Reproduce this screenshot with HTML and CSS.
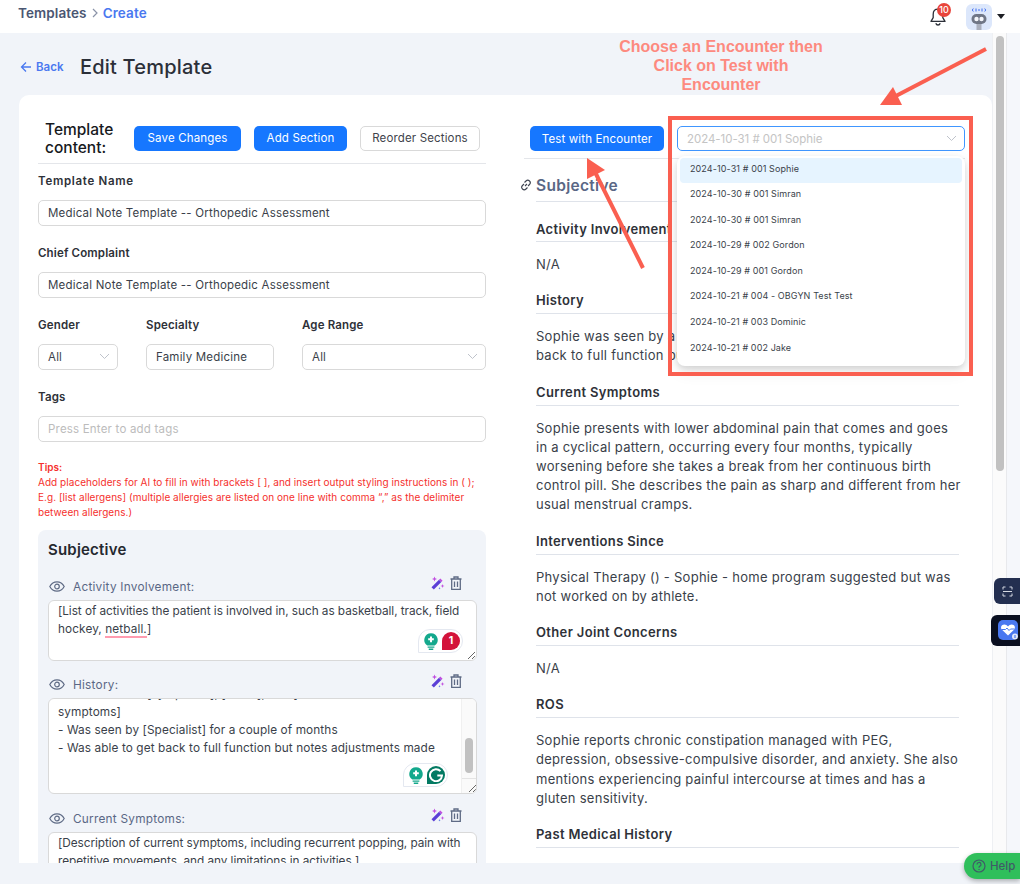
FILE: index.html
```html
<!DOCTYPE html>
<html lang="en">
<head>
<meta charset="utf-8">
<title>Edit Template</title>
<link rel="stylesheet" href="styles.css">
</head>
<body>
<header class="topbar">
  <nav class="crumbs"><span>Templates</span>
    <svg class="crumb-sep" width="8" height="10" viewBox="0 0 8 10"><path d="M2 1l4 4-4 4" fill="none" stroke="#8a93a8" stroke-width="1.2"/></svg>
    <span class="crumb-active">Create</span></nav>
  <div class="top-actions">
    <div class="bell">
      <svg width="18" height="20" viewBox="0 0 18 20"><path d="M9 2.2c-3 0-4.8 2.2-4.8 5v3.4L2 14.4h14l-2.2-3.8V7.200c0-2.800-1.800-5-4.800-5zM6.800 16.200c.4 1.200 1.200 1.800 2.200 1.800s1.800-.6 2.200-1.800" fill="none" stroke="#2b2f38" stroke-width="1.300" stroke-linejoin="round"/></svg>
      <span class="bell-badge">10</span>
    </div>
    <div class="avatar">
      <svg width="26" height="26" viewBox="0 0 26 26">
        <path d="M7.300 4.500l-1 1.500 1 1.500M18.700 4.500l1 1.500-1 1.500M10 4.500v3M16 4.500v3M13 5v2" stroke="#3f6df0" stroke-width="1" fill="none"/>
        <rect x="10.500" y="19" width="5" height="7" fill="#a9afbd"/>
        <rect x="5.500" y="10" width="15" height="10" rx="5" fill="#6f7686"/>
        <circle cx="10.500" cy="15" r="2.200" fill="#f4f6fb"/><circle cx="15.500" cy="15" r="2.200" fill="#f4f6fb"/>
      </svg>
    </div>
    <span class="caret"></span>
  </div>
</header>

<div class="workspace">
  <main class="main">
    <div class="title-row">
      <a class="back">
        <svg width="12" height="12" viewBox="0 0 12 12"><path d="M11 6H1.500M6 1.500L1.500 6 6 10.500" fill="none" stroke="#4a78f0" stroke-width="1.300"/></svg>
        Back</a>
      <h1 class="page-title">Edit Template</h1>
    </div>
    <div class="card">
      <section class="left">
        <div class="head-row">
          <div class="head-title">Template<br>content:</div>
          <button class="btn btn-primary btn-save">Save Changes</button>
          <button class="btn btn-primary btn-add">Add Section</button>
          <button class="btn btn-plain">Reorder Sections</button>
        </div>
        <label class="lbl lbl-first">Template Name</label>
        <div class="field">Medical Note Template -- Orthopedic Assessment</div>
        <label class="lbl">Chief Complaint</label>
        <div class="field">Medical Note Template -- Orthopedic Assessment</div>
        <div class="tri">
          <div class="tri-gender"><label class="lbl">Gender</label>
            <div class="field field-select">All<svg class="chev" width="11" height="7" viewBox="0 0 11 7"><path d="M1 1l4.500 4.500L10 1" fill="none" stroke="#bfc3cb"/></svg></div></div>
          <div class="tri-spec"><label class="lbl">Specialty</label>
            <div class="field">Family Medicine</div></div>
          <div class="tri-age"><label class="lbl">Age Range</label>
            <div class="field field-select">All<svg class="chev" width="11" height="7" viewBox="0 0 11 7"><path d="M1 1l4.500 4.500L10 1" fill="none" stroke="#bfc3cb"/></svg></div></div>
        </div>
        <label class="lbl">Tags</label>
        <div class="field field-ph">Press Enter to add tags</div>
        <div class="tips"><strong>Tips:</strong><br>Add placeholders for AI to fill in with brackets [ ], and insert output styling instructions in ( );<br>E.g. [list allergens] (multiple allergies are listed on one line with comma “,” as the delimiter<br>between allergens.)</div>
        <div class="panel">
          <h2 class="panel-title">Subjective</h2>

          <div class="item-head">
            <svg class="eye" width="16" height="11" viewBox="0 0 16 11"><path d="M.8 5.500C2.500 2.300 5 .8 8 .8s5.500 1.500 7.200 4.700C13.500 8.700 11 10.200 8 10.200S2.500 8.700.8 5.500z" fill="none" stroke="#5f6b85" stroke-width="1.200"/><circle cx="8" cy="5.500" r="2.300" fill="none" stroke="#5f6b85" stroke-width="1.200"/></svg>
            <span class="item-name">Activity Involvement:</span>
            <svg class="wand" width="14" height="14" viewBox="0 0 14 14"><path d="M.5 11.200L8 3.700l2.300 2.300-7.500 7.500z" fill="#5b3fd6"/><path d="M8 3.700l2.300 2.300 1.300-1.300-2.300-2.300z" fill="#c04de0"/><path d="M3.500 .5l.7 1.800 1.800.7-1.800.7-.7 1.800-.7-1.800L1 3l1.800-.7zM11.500 8l.5 1.500 1.500.5-1.500.5-.5 1.500-.5-1.500-1.500-.5 1.500-.5z" fill="#c04de0"/><path d="M8.500 11l.3.9.9.3-.9.3-.3.9-.3-.9-.9-.3.9-.3z" fill="#3f5de0"/></svg>
            <svg class="trash" width="12" height="14" viewBox="0 0 12 14"><path d="M.5 3h11M4 3V1h4v2M1.700 3v10.300h8.600V3M4.500 5.500v5.500M7.500 5.500v5.500" fill="none" stroke="#5f6b85" stroke-width="1.300"/></svg>
          </div>
          <div class="area area-a"><span class="tight">[List of activities the patient is involved in, such as basketball, track, field</span><br>hockey, <span class="misspelt">netball.</span>]
            <div class="gram gram-a">
              <svg width="16" height="18" viewBox="0 0 14 16"><path d="M7 1a6 6 0 0 0-3.300 11h6.600A6 6 0 0 0 7 1z" fill="#13a88c"/><path d="M7 4v5M4.500 6.500h5" stroke="#fff" stroke-width="1.800"/><path d="M4 13.500h6M5 15.300h4" stroke="#13a88c" stroke-width="1.200"/></svg>
              <span class="gram-count">1</span>
            </div>
            <svg class="resize" width="8" height="8" viewBox="0 0 8 8"><path d="M1 8l7-7M5 8l3-3" stroke="#666"/></svg>
          </div>

          <div class="item-head">
            <svg class="eye" width="16" height="11" viewBox="0 0 16 11"><path d="M.8 5.500C2.500 2.300 5 .8 8 .8s5.500 1.500 7.200 4.700C13.500 8.700 11 10.200 8 10.200S2.500 8.700.8 5.500z" fill="none" stroke="#5f6b85" stroke-width="1.200"/><circle cx="8" cy="5.500" r="2.300" fill="none" stroke="#5f6b85" stroke-width="1.200"/></svg>
            <span class="item-name">History:</span>
            <svg class="wand" width="14" height="14" viewBox="0 0 14 14"><path d="M.5 11.200L8 3.700l2.300 2.300-7.500 7.500z" fill="#5b3fd6"/><path d="M8 3.700l2.300 2.300 1.300-1.300-2.300-2.300z" fill="#c04de0"/><path d="M3.500 .5l.7 1.800 1.800.7-1.800.7-.7 1.800-.7-1.800L1 3l1.800-.7zM11.500 8l.5 1.500 1.500.5-1.500.5-.5 1.500-.5-1.500-1.500-.5 1.500-.5z" fill="#c04de0"/><path d="M8.500 11l.3.9.9.3-.9.3-.3.9-.3-.9-.9-.3.9-.3z" fill="#3f5de0"/></svg>
            <svg class="trash" width="12" height="14" viewBox="0 0 12 14"><path d="M.5 3h11M4 3V1h4v2M1.700 3v10.300h8.600V3M4.500 5.500v5.500M7.500 5.500v5.500" fill="none" stroke="#5f6b85" stroke-width="1.300"/></svg>
          </div>
          <div class="area area-b">
            <div class="area-b-text">- Presents with [symptoms], [onset], and [other<br>symptoms]<br>- Was seen by [Specialist] for a couple of months<br>- Was able to get back to full function but notes adjustments made</div>
            <div class="area-scroll"><span class="area-thumb"></span><span class="area-corner"><svg width="8" height="8" viewBox="0 0 8 8"><path d="M1 8l7-7M5 8l3-3" stroke="#666"/></svg></span></div>
            <div class="gram gram-b">
              <svg width="16" height="18" viewBox="0 0 14 16"><path d="M7 1a6 6 0 0 0-3.300 11h6.600A6 6 0 0 0 7 1z" fill="#13a88c"/><path d="M7 4v5M4.500 6.500h5" stroke="#fff" stroke-width="1.800"/><path d="M4 13.500h6M5 15.300h4" stroke="#13a88c" stroke-width="1.200"/></svg>
              <span class="gram-g"><svg width="14" height="14" viewBox="0 0 14 14"><path d="M11.500 3.200A6 6 0 1 0 13 7.500H8.300" fill="none" stroke="#fff" stroke-width="2"/></svg></span>
            </div>
          </div>

          <div class="item-head">
            <svg class="eye" width="16" height="11" viewBox="0 0 16 11"><path d="M.8 5.500C2.500 2.300 5 .8 8 .8s5.500 1.500 7.200 4.700C13.500 8.700 11 10.200 8 10.200S2.500 8.700.8 5.500z" fill="none" stroke="#5f6b85" stroke-width="1.200"/><circle cx="8" cy="5.500" r="2.300" fill="none" stroke="#5f6b85" stroke-width="1.200"/></svg>
            <span class="item-name">Current Symptoms:</span>
            <svg class="wand" width="14" height="14" viewBox="0 0 14 14"><path d="M.5 11.200L8 3.700l2.300 2.300-7.500 7.500z" fill="#5b3fd6"/><path d="M8 3.700l2.300 2.300 1.300-1.300-2.300-2.300z" fill="#c04de0"/><path d="M3.500 .5l.7 1.800 1.800.7-1.800.7-.7 1.800-.7-1.800L1 3l1.800-.7zM11.500 8l.5 1.500 1.500.5-1.500.5-.5 1.500-.5-1.500-1.500-.5 1.500-.5z" fill="#c04de0"/><path d="M8.500 11l.3.9.9.3-.9.3-.3.9-.3-.9-.9-.3.9-.3z" fill="#3f5de0"/></svg>
            <svg class="trash" width="12" height="14" viewBox="0 0 12 14"><path d="M.5 3h11M4 3V1h4v2M1.700 3v10.300h8.600V3M4.500 5.500v5.500M7.500 5.500v5.500" fill="none" stroke="#5f6b85" stroke-width="1.300"/></svg>
          </div>
          <div class="area area-c"><span class="tight">[Description of current symptoms, including recurrent popping, pain with</span><br><span class="tight">repetitive movements, and any limitations in activities.]</span></div>
        </div>
      </section>

      <section class="right">
        <div class="test-row">
          <button class="btn btn-primary btn-test">Test with Encounter</button>
          <div class="enc-select">2024-10-31 # 001 Sophie<svg class="enc-chev" width="11" height="7" viewBox="0 0 11 7"><path d="M1 1l4.500 4.500L10 1" fill="none" stroke="#bfc3cb"/></svg></div>
        </div>
        <article class="note">
          <h2 class="note-title"><svg class="link-ico" width="12" height="12" viewBox="0 0 12 12"><path d="M5 7l2-2M4.500 3.500l1.500-1.500a2.300 2.300 0 0 1 3.500 3.500L8 7M7.500 8.500L6 10a2.300 2.300 0 0 1-3.500-3.500L4 5" fill="none" stroke="#3d4350" stroke-width="1.100"/></svg>Subjective</h2>
          <h3 class="note-h">Activity Involvement</h3>
          <p class="note-p">N/A</p>
          <h3 class="note-h">History</h3>
          <p class="note-p">Sophie was seen by a specialist for a couple of months and<br>back to full function but notes some adjustments.</p>
          <h3 class="note-h">Current Symptoms</h3>
          <p class="note-p">Sophie presents with lower abdominal pain that comes and goes<br>in a cyclical pattern, occurring every four months, typically<br>worsening before she takes a break from her continuous birth<br>control pill. She describes the pain as sharp and different from her<br>usual menstrual cramps.</p>
          <h3 class="note-h">Interventions Since</h3>
          <p class="note-p">Physical Therapy () - Sophie - home program suggested but was<br>not worked on by athlete.</p>
          <h3 class="note-h">Other Joint Concerns</h3>
          <p class="note-p">N/A</p>
          <h3 class="note-h">ROS</h3>
          <p class="note-p">Sophie reports chronic constipation managed with PEG,<br>depression, obsessive-compulsive disorder, and anxiety. She also<br>mentions experiencing painful intercourse at times and has a<br>gluten sensitivity.</p>
          <h3 class="note-h">Past Medical History</h3>
        </article>
      </section>
    </div>
  </main>
  <div class="scrollbar"><span class="scroll-thumb"></span></div>
  <div class="gutter"></div>
</div>
<div class="bottom-strip"></div>

<ul class="enc-menu">
  <li class="enc-item enc-item-on">2024-10-31 # 001 Sophie</li>
  <li class="enc-item">2024-10-30 # 001 Simran</li>
  <li class="enc-item">2024-10-30 # 001 Simran</li>
  <li class="enc-item">2024-10-29 # 002 Gordon</li>
  <li class="enc-item">2024-10-29 # 001 Gordon</li>
  <li class="enc-item">2024-10-21 # 004 - OBGYN Test Test</li>
  <li class="enc-item">2024-10-21 # 003 Dominic</li>
  <li class="enc-item">2024-10-21 # 002 Jake</li>
</ul>

<div class="anno-box"></div>
<div class="anno-text">Choose an Encounter then<br>Click on Test with<br>Encounter</div>
<svg class="anno-arrows" width="1020" height="884" viewBox="0 0 1020 884">
  <path d="M986 49L892 98" stroke="#fa5f50" stroke-width="4" fill="none"/>
  <path d="M880 105L893 87L902 105z" fill="#fa5f50"/>
  <path d="M643 268L595 172" stroke="#fa5f50" stroke-width="4" fill="none"/>
  <path d="M587 158L587 179L605 170z" fill="#fa5f50"/>
</svg>

<div class="float-scan"><svg width="11" height="11" viewBox="0 0 11 11"><path d="M1 3.500V1h2.500M7.500 1H10v2.500M10 7.500V10H7.500M3.500 10H1V7.500M1 5.500h9" fill="none" stroke="#d5d9e2" stroke-width="1"/></svg></div>
<div class="float-heart"><span class="heart-tile"><svg width="20" height="20" viewBox="0 0 20 20"><path d="M10 15.500L4 9.800C2 7.500 3.500 4.500 6.300 4.500c1.500 0 2.800.8 3.700 2 .9-1.200 2.200-2 3.700-2 2.800 0 4.300 3 2.300 5.300z" fill="#fff"/><path d="M3.500 9.500h4l1.500-1.500 2 2.500 1.500-1.500h4" fill="none" stroke="#4a78f0" stroke-width="1"/><circle cx="17" cy="16.500" r="3" fill="#dfe7fb"/><path d="M17 15v3" stroke="#4a78f0" stroke-width="1.200"/></svg></span></div>
<div class="help"><svg width="14" height="14" viewBox="0 0 14 14"><circle cx="7" cy="7" r="6" fill="none" stroke="#3f5b68" stroke-width="1.200"/><path d="M5 5.500A2 2 0 1 1 7.500 7.400C7 7.600 7 8 7 8.700M7 10v1" fill="none" stroke="#3f5b68" stroke-width="1.200"/></svg>Help</div>
</body>
</html>
```

FILE: styles.css
```css
* { box-sizing: border-box; }
html, body { margin: 0; padding: 0; }
body {
  width: 1020px; height: 884px; overflow: hidden; position: relative;
  background: #f1f4f9; color: #3a3f4a;
  font-family: Inter, "Open Sans", sans-serif; font-size: 12px;
}
.topbar { height: 33px; background: #fff; display: flex; align-items: center; justify-content: space-between; padding: 0 15px 7px 18px; }
.crumbs { display: flex; align-items: center; gap: 4px; font-size: 13.500px; font-weight: 600; color: #4a5672; letter-spacing: .1px; }
.crumb-active { color: #4a78f0; }
.top-actions { display: flex; align-items: center; position: relative; margin-top: 7px; }
.bell { position: relative; width: 18px; height: 20px; margin-right: 19px; }
.bell-badge { position: absolute; left: 8px; top: -4px; width: 14px; height: 14px; border-radius: 50%; background: #e8453c; color: #fff; font-size: 9px; font-weight: 500; line-height: 14px; text-align: center; }
.avatar { width: 26px; height: 26px; border-radius: 6px; background: #dce7fb; overflow: hidden; margin-right: 5px; }
.caret { width: 0; height: 0; border-left: 4.500px solid transparent; border-right: 4.500px solid transparent; border-top: 5px solid #1d1f24; }

.workspace { height: 830px; display: flex; }
.main { width: 992px; overflow: hidden; padding-left: 19px; }
.title-row { height: 62px; display: flex; align-items: center; padding-left: 1px; padding-top: 6px; }
.back { display: flex; align-items: center; gap: 4px; color: #4a78f0; font-weight: 600; font-size: 11.500px; width: 60px; }
.page-title { margin: 0; font-size: 20px; font-weight: 500; color: #2b2f38; letter-spacing: .2px; }
.card { width: 973px; background: #fff; border-radius: 10px 10px 0 0; padding: 31px 27px 0 19px; display: flex; height: 768px; }
.left { width: 448px; flex: none; }
.right { flex: 1; margin-left: 44px; min-width: 0; }

.head-row { display: flex; align-items: center; height: 38px; border-bottom: 1px solid #e4e6ea; padding-left: 7px; }
.head-title { width: 89px; font-size: 15.500px; font-weight: 500; line-height: 18px; color: #17191d; margin-top: -11px; }
.btn { height: 25px; border-radius: 5px; border: 1px solid transparent; font: inherit; font-size: 11.500px; padding: 0; cursor: pointer; letter-spacing: .15px; margin-top: -13px; flex: none; }
.btn-primary { background: #1677ff; color: #fff; }
.btn-plain { background: #fff; border-color: #d9d9d9; color: #3f434c; width: 120px; }
.btn-save { width: 107px; margin-right: 13px; }
.btn-add { width: 93px; margin-right: 13px; }
.btn-test { width: 134px; margin: 0; }

.lbl { display: block; font-size: 11.500px; font-weight: 600; color: #2e3138; line-height: 16px; margin: 19px 0 11px; letter-spacing: .15px; }
.lbl-first { margin-top: 9px; letter-spacing: .7px; }
.field { position: relative; height: 26px; border: 1px solid #d9d9d9; border-radius: 5px; background: #fff; padding: 0 9px; line-height: 24px; font-size: 11.500px; color: #3a3f4a; letter-spacing: .2px; white-space: nowrap; }
.field-ph { color: #bcbcbc; }
.chev { position: absolute; right: 7px; top: 8px; }
.tri { display: flex; }
.tri-gender { width: 80px; margin-right: 28px; }
.tri-spec { width: 128px; margin-right: 28px; }
.tri-age { flex: 1; }
.tips { margin-top: 18px; color: #f5302d; font-size: 10px; line-height: 15px; letter-spacing: .04px; white-space: nowrap; }
.tips strong { font-weight: 600; }
.panel { margin-top: 10px; background: #f1f4f9; border-radius: 8px 8px 0 0; padding: 10px 9px 0 10px; height: 400px; overflow: hidden; }
.panel-title { margin: 0 0 13px; font-size: 15px; font-weight: 600; color: #25282f; line-height: 20px; letter-spacing: .2px; }
.item-head { display: flex; align-items: center; height: 27px; padding-left: 1px; position: relative; }
.eye { margin-right: 8px; flex: none; }
.item-name { flex: 1; color: #5a6785; font-size: 11.800px; letter-spacing: .25px; }
.wand { margin-right: 5px; margin-top: -8px; }
.trash { margin-right: 15px; margin-top: -8px; }
.area { position: relative; border: 1px solid #d9d9d9; border-radius: 6px; background: #fff; padding: 2px 9px; font-size: 11.800px; line-height: 17.500px; color: #3a3f4a; letter-spacing: .1px; white-space: nowrap; overflow: hidden; }
.tight { letter-spacing: -.05px; }
.area-a { height: 61px; margin-bottom: 10px; }
.area-b { height: 96px; margin-bottom: 11px; padding: 0; display: flex; }
.area-b-text { flex: 1; padding: 0 9px; margin-top: -14px; line-height: 18px; }
.area-scroll { width: 15px; flex: none; background: #fafafa; border-left: 1px solid #f0f0f0; display: flex; flex-direction: column; align-items: center; justify-content: flex-end; }
.area-thumb { width: 8px; height: 35px; border-radius: 4px; background: #c1c1c1; margin-bottom: 5px; }
.area-corner { width: 15px; height: 15px; border-top: 1px solid #e4e4e4; display: flex; align-items: flex-end; justify-content: flex-end; padding: 0 1px 1px 0; }
.area-corner svg { display: block; }
.area-c { height: 60px; }
.misspelt { border-bottom: 2.500px solid #ff9cb0; }
.resize { position: absolute; right: 1px; bottom: 1px; }
.gram { position: absolute; display: flex; align-items: center; gap: 3px; height: 24px; background: #fff; border: 1px solid #e4e8f0; border-radius: 12px 12px 12px 0; padding: 0 2px 0 4px; }
.gram-a { right: 13px; top: 28px; }
.gram-b { right: 28px; bottom: 6px; }
.gram-count { width: 18px; height: 18px; border-radius: 9px 9px 9px 0; background: #d3133a; color: #fff; font-size: 10.500px; font-weight: 700; line-height: 18px; text-align: center; letter-spacing: 0; }
.gram-g { width: 18px; height: 18px; border-radius: 9px 9px 9px 0; background: #037a63; display: flex; align-items: center; justify-content: center; }

.test-row { display: flex; align-items: center; gap: 13px; width: 441px; height: 33px; margin-left: -6px; padding-left: 6px; padding-bottom: 7px; border-bottom: 1px solid #e4e6ea; }
.enc-select { position: relative; width: 288px; height: 25px; flex: none; border: 1px solid #4096ff; border-radius: 5px; background: #fff; color: #c4c4c4; font-size: 11.500px; line-height: 24px; padding: 0 9px; letter-spacing: -.05px; }
.enc-chev { position: absolute; right: 7px; top: 8px; }
.note { color: #3a3f4a; padding: 0 0 0 6px; width: 429px; }
.note-title { position: relative; margin: 17px 0 0; height: 26px; font-size: 15.500px; font-weight: 600; color: #5a6785; line-height: 20px; border-bottom: 1px solid #dfe3ea; letter-spacing: .3px; }
.link-ico { position: absolute; left: -16px; top: 3px; }
.note-h { margin: 0; height: 24px; font-size: 13px; font-weight: 600; color: #2e3138; line-height: 20px; border-bottom: 1px solid #dfe3ea; letter-spacing: .35px; white-space: nowrap; }
.note-title + .note-h { margin-top: 17px; height: 23px; }
.note-p { margin: 13px 0 16px; font-size: 13px; line-height: 19.200px; letter-spacing: .27px; white-space: nowrap; }

.scrollbar { width: 15px; background: #fbfbfb; border-left: 1px solid #eef0f3; border-right: 1px solid #e8e9ec; padding: 3px 2px 0 3px; }
.scroll-thumb { display: block; height: 435px; width: 8px; border-radius: 4px; background: #c1c1c1; }
.gutter { flex: 1; background: #f5f7fb; }
.bottom-strip { height: 21px; background: #f1f4f9; }

.enc-menu { position: absolute; left: 677px; top: 156px; width: 288px; height: 210px; margin: 0; padding: 2px 3px; list-style: none; background: #fff; border-radius: 8px; box-shadow: 0 6px 16px rgba(0,0,0,.08), 0 3px 6px rgba(0,0,0,.12); }
.enc-item { height: 25.600px; padding-left: 10px; font-size: 9px; line-height: 22px; color: #3a3f4a; letter-spacing: .1px; border-radius: 4px; }
.enc-item-on { background: #e6f4ff; height: 25px; }
.anno-box { position: absolute; left: 668px; top: 116px; width: 305px; height: 260px; border: 4px solid #fa5f50; }
.anno-text { position: absolute; left: 600px; top: 37px; width: 242px; text-align: center; font-family: "Liberation Sans", Arial, sans-serif; font-size: 16px; font-weight: 700; line-height: 19px; color: #fd8a7f; }
.anno-arrows { position: absolute; left: 0; top: 0; pointer-events: none; }
.float-scan { position: absolute; left: 994px; top: 578px; width: 26px; height: 26px; border-radius: 6px 0 0 6px; background: #232f50; display: flex; align-items: center; justify-content: center; }
.float-heart { position: absolute; left: 991px; top: 615px; width: 29px; height: 31px; border-radius: 6px 0 0 6px; background: #0a0f20; padding: 5px 2px 0 7px; }
.heart-tile { display: block; width: 20px; height: 20px; border-radius: 5px; background: #4a78f0; }
.heart-tile svg { display: block; }
.help { position: absolute; left: 964px; top: 853px; width: 56px; height: 26px; border-radius: 13px 0 0 13px; background: #2fbf5b; color: #3f5b68; font-size: 11.500px; font-weight: 500; display: flex; align-items: center; gap: 4px; padding-left: 8px; box-shadow: 0 2px 5px rgba(0,0,0,.3); }
```
